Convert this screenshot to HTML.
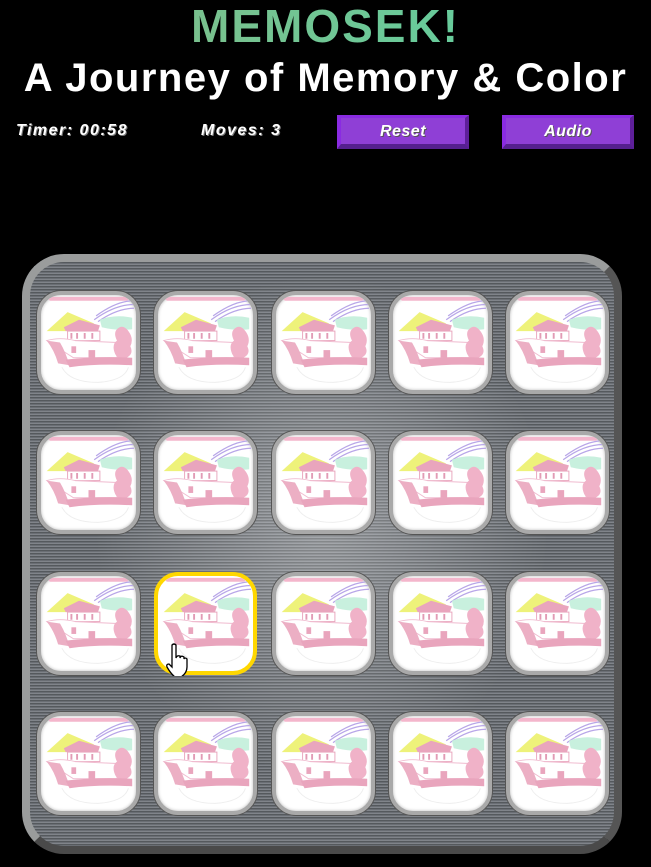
<!DOCTYPE html>
<html><head><meta charset="utf-8">
<style>
*{margin:0;padding:0;box-sizing:border-box}
body{width:651px;height:867px;background:#000;overflow:hidden;position:relative;font-family:"Liberation Sans","DejaVu Sans",sans-serif}
.t1{position:absolute;top:0px;left:0;width:651px;text-align:center;font-size:46px;font-weight:bold;letter-spacing:2px;background:linear-gradient(90deg,#86b883,#5ad4a6);-webkit-background-clip:text;color:transparent;line-height:52px}
.t2{position:absolute;top:56px;left:0;width:651px;text-align:center;font-size:40px;font-weight:bold;color:#fff;line-height:44px;letter-spacing:1.5px}
.st{position:absolute;top:122px;font-size:16px;font-weight:bold;font-style:italic;color:#fff;text-shadow:1px 1px 0 #777;letter-spacing:1.5px}
.btn{position:absolute;top:115px;width:132px;height:34px;background:#8f3fd6;border-style:solid;border-width:3px 4px 5px 4px;border-color:#8a2be2 #5e1f9a #55208f #8a2be2;color:#fff;font-weight:bold;font-style:italic;font-size:16px;text-align:center;line-height:27px;text-shadow:1px 1px 0 #555;letter-spacing:.5px}
.board{position:absolute;left:22px;top:254px;width:600px;height:600px;border-radius:42px;border:8px solid;border-color:#9a9c9c #555 #4a4a4a #9a9c9c;
background:radial-gradient(ellipse at 50% 45%,rgba(255,255,255,.3),rgba(255,255,255,0) 55%),repeating-linear-gradient(180deg,#55595d 0,#55595d 1.5px,#80848a 1.5px,#80848a 3px);background-color:#666}
.c{position:absolute;width:103px;height:103px;border-radius:24px;background:#fff;border:4px solid #a9a9a9;box-shadow:0 0 0 1px #555,inset 0 0 3px #bbb;overflow:hidden}
.c.sel{border:4px solid #ffd700;box-shadow:none}
.c svg{position:absolute;left:0;top:0;width:100%;height:100%}
</style></head><body>
<div class="t1">MEMOSEK!</div>
<div class="t2">A Journey of Memory &amp; Color</div>
<div class="st" style="left:16px">Timer: 00:58</div>
<div class="st" style="left:201px">Moves: 3</div>
<div class="btn" style="left:337px">Reset</div>
<div class="btn" style="left:502px">Audio</div>
<svg width="0" height="0" style="position:absolute">
<defs><g id="art">
<rect x="8" y="2" width="84" height="4" rx="2" fill="#f4b6cc"/>
<path d="M58 22 Q80 6 98 6 M56 26 Q78 10 98 10 M60 28 Q80 14 98 14" stroke="#b8a6e8" stroke-width="1.3" fill="none"/>
<path d="M6 38 L28 18 L56 30 L40 38 Z" fill="#eef27a"/>
<path d="M62 26 Q78 20 96 24 L96 36 Q80 38 64 34 Z" fill="#c8f0de"/>
<path d="M24 34 L40 26 L62 32 L60 38 L26 38 Z" fill="#e9a5bd"/>
<rect x="28" y="38" width="34" height="10" fill="#fff" stroke="#e9a5bd"/>
<path d="M32 40 v6 M38 40 v6 M46 40 v6 M54 40 v6" stroke="#e29bb5" stroke-width="2"/>
<path d="M6 48 Q20 44 36 48 L80 50 L80 66 L34 66 Z" fill="#fff" stroke="#f0bcd0"/>
<path d="M6 48 Q14 58 18 72 L30 74 Q26 60 20 50 Z" fill="#ecafc4"/>
<rect x="32" y="54" width="5" height="7" fill="#e9a5bd"/>
<rect x="50" y="58" width="7" height="8" fill="#e9a5bd"/>
<path d="M80 36 q6 -6 12 2 q6 8 2 16 q4 8 -4 12 q-8 4 -12 -4 q-4 -10 2 -14 q-4 -8 0 -12z" fill="#f0b2c8"/>
<path d="M26 68 Q60 64 96 66 L96 74 Q60 72 30 76 Z" fill="#e9a5bd"/>
<path d="M22 76 Q30 92 60 92 Q88 90 92 76" stroke="#eee" fill="none"/>
</g></defs></svg>
<div class="board"></div>
<div id="cards"></div>
<script>
var xs=[37,154,272,389,506],ys=[291,431,572,712],h='';
for(var r=0;r<4;r++)for(var i=0;i<5;i++){var sel=(r==2&&i==1);
h+='<div class="c'+(sel?' sel':'')+'" style="left:'+xs[i]+'px;top:'+ys[r]+'px"><svg viewBox="0 0 100 100"><use href="#art"/></svg></div>';}
document.getElementById('cards').innerHTML=h;
</script>
<svg style="position:absolute;left:165px;top:642px" width="26" height="34" viewBox="0 0 26 34">
<path d="M7 3 q2-2 4 0 v13 q1-3 4-2 v2 q1-3 4-1 v2 q1-2 3 0 v8 q0 6-6 10 h-6 q-4-3-8-10 q-1-3 2-3 l3 3 z" fill="#fff" stroke="#000" stroke-width="1.3"/>
</svg>
</body></html>
